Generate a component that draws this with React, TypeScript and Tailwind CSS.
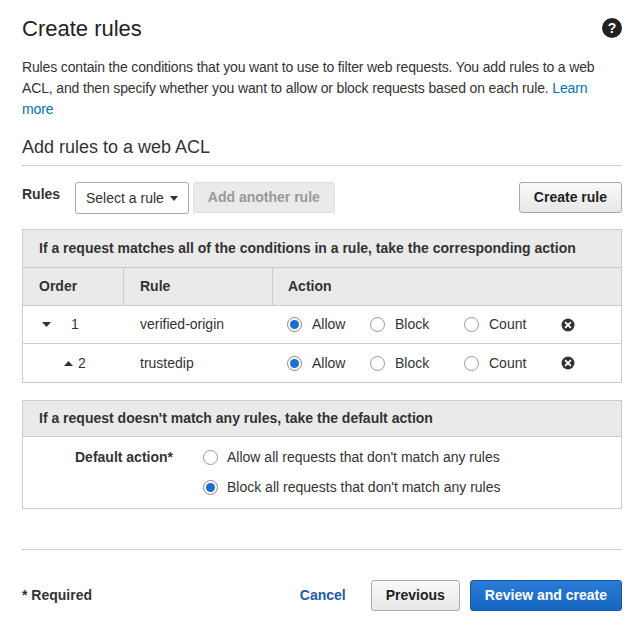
import React, { useState } from 'react';

const Radio = ({ on }: { on: boolean }) => (
  <span className={`inline-flex items-center justify-center w-[15px] h-[15px] rounded-full border ${on ? 'border-[#888]' : 'border-[#999]'} bg-white shrink-0`}>
    {on && <span className="w-[9px] h-[9px] rounded-full bg-[#1a6fd0]" />}
  </span>
);

const XIcon = () => (
  <svg width="14" height="14" viewBox="0 0 14 14">
    <circle cx="7" cy="7" r="6.5" fill="#333" />
    <path d="M4.6 4.6 L9.4 9.4 M9.4 4.6 L4.6 9.4" stroke="#fff" strokeWidth="1.8" strokeLinecap="round" />
  </svg>
);

const rules = [
  { order: 1, name: 'verified-origin', arrow: 'down' },
  { order: 2, name: 'trustedip', arrow: 'up' },
];

export default function App() {
  const [def] = useState<'allow' | 'block'>('block');
  return (
    <div className="w-[638px] h-[620px] bg-white text-[#333] pl-[22px] pr-[16px] pt-[14px]" style={{ fontFamily: '"Liberation Sans", Arial, sans-serif' }}>
      <div className="flex items-center justify-between h-[28px]">
        <h1 className="text-[22px] text-[#222]">Create rules</h1>
        <svg width="20" height="20" viewBox="0 0 20 20">
          <circle cx="10" cy="10" r="10" fill="#222" />
          <text x="10" y="15" textAnchor="middle" fontSize="14" fontWeight="bold" fill="#fff" fontFamily="Liberation Sans, Arial, sans-serif">?</text>
        </svg>
      </div>
      <p className="text-[14px] leading-[21px] mt-[15px] text-[#333] tracking-[-0.15px]">
        Rules contain the conditions that you want to use to filter web requests. You add rules to a web ACL, and then specify whether you want to allow or block requests based on each rule. <span className="text-[#0073bb]">Learn more</span>
      </p>
      <h2 className="text-[18px] text-[#333] mt-[14px] pb-[4px] border-b border-[#ccc]">Add rules to a web ACL</h2>
      <div className="flex items-start mt-[16px] h-[32px]">
        <span className="text-[14px] font-bold mt-[2px] w-[53px]">Rules</span>
        <button className="h-[32px] px-[10px] border border-[#aaa] rounded-[3px] text-[14px] flex items-center gap-[6px] bg-white">
          Select a rule
          <svg width="8" height="5" viewBox="0 0 8 5"><path d="M0 0 L8 0 L4 5 Z" fill="#333" /></svg>
        </button>
        <button className="h-[31px] ml-[4px] px-[14px] rounded-[3px] text-[14px] font-bold text-[#999] bg-[#eaeaea] border border-[#e0e0e0]">Add another rule</button>
        <button className="ml-auto h-[31px] px-[14px] rounded-[3px] text-[14px] font-bold text-[#222] border border-[#aaa] bg-gradient-to-b from-[#fafafa] to-[#e7e7e7]">Create rule</button>
      </div>
      <div className="mt-[15px] border border-[#ccc] text-[14px]">
        <div className="bg-[#eaeaea] h-[38px] flex items-center px-[16px] font-bold border-b border-[#ccc]">If a request matches all of the conditions in a rule, take the corresponding action</div>
        <div className="flex bg-[#eaeaea] h-[38px] font-bold border-b border-[#ccc]">
          <div className="w-[101px] flex items-center pl-[16px] border-r border-[#ccc]">Order</div>
          <div className="w-[149px] flex items-center pl-[16px] border-r border-[#ccc]">Rule</div>
          <div className="flex items-center pl-[15px]">Action</div>
        </div>
        {rules.map((r, i) => (
          <div key={r.order} className={`flex h-[38px] items-center ${i === 0 ? 'border-b border-[#ccc]' : ''}`}>
            <div className="w-[101px] flex items-center">
              {r.arrow === 'down' ? (
                <>
                  <svg width="9" height="5" viewBox="0 0 9 5" className="ml-[19px]"><path d="M0 0 L9 0 L4.5 5 Z" fill="#333" /></svg>
                  <span className="ml-[20px]">{r.order}</span>
                </>
              ) : (
                <>
                  <svg width="9" height="5" viewBox="0 0 9 5" className="ml-[41px]"><path d="M0 5 L9 5 L4.5 0 Z" fill="#333" /></svg>
                  <span className="ml-[5px]">{r.order}</span>
                </>
              )}
            </div>
            <div className="w-[149px] pl-[16px]">{r.name}</div>
            <div className="flex items-center pl-[14px]">
              <div className="flex items-center gap-[10px] w-[83px]"><Radio on /> Allow</div>
              <div className="flex items-center gap-[10px] w-[94px]"><Radio on={false} /> Block</div>
              <div className="flex items-center gap-[10px] w-[97px]"><Radio on={false} /> Count</div>
              <XIcon />
            </div>
          </div>
        ))}
      </div>
      <div className="mt-[17px] border border-[#ccc] text-[14px]">
        <div className="bg-[#eaeaea] h-[36px] flex items-center px-[16px] font-bold border-b border-[#ccc]">If a request doesn't match any rules, take the default action</div>
        <div className="flex pt-[10px] h-[71px]">
          <div className="w-[180px] text-right pr-[30px] font-bold">Default action*</div>
          <div className="flex flex-col gap-[9px]">
            <div className="flex items-center gap-[9px]"><Radio on={def === 'allow'} /> Allow all requests that don't match any rules</div>
            <div className="flex items-center gap-[9px]"><Radio on={def === 'block'} /> Block all requests that don't match any rules</div>
          </div>
        </div>
      </div>
      <div className="mt-[40px] border-t border-[#ccc]" />
      <div className="flex items-center mt-[30px] text-[14px]">
        <span className="font-bold">* Required</span>
        <span className="ml-auto font-bold text-[#1f5aa8] mr-[25px]">Cancel</span>
        <button className="h-[31px] px-[14px] rounded-[3px] font-bold text-[#222] border border-[#aaa] bg-gradient-to-b from-[#fafafa] to-[#e7e7e7]">Previous</button>
        <button className="ml-[10px] h-[31px] px-[14px] rounded-[3px] font-bold text-white border border-[#1458a8] bg-gradient-to-b from-[#2a7bd6] to-[#1566c4]">Review and create</button>
      </div>
    </div>
  );
}
